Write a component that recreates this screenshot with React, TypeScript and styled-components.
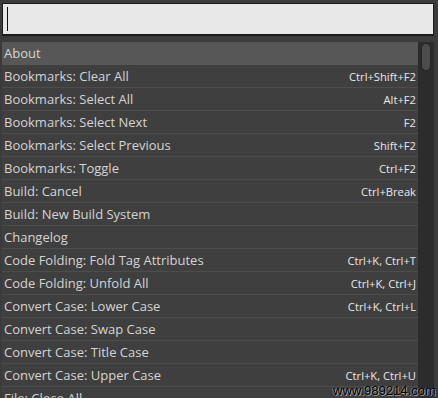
import React from "react";
import styled, { createGlobalStyle } from "styled-components";

const Global = createGlobalStyle`
  html, body { margin: 0; padding: 0; background: #3b3b3b; overflow: hidden; }
  body { width: 438px; height: 398px; }
`;

const Frame = styled.div`
  position: relative;
  width: 438px;
  height: 398px;
  box-sizing: border-box;
  padding: 3px 4px 0 2px;
  display: flex;
  flex-direction: column;
  gap: 6px;
  overflow: hidden;
  font-family: "Open Sans", "Noto Sans", sans-serif;
`;

const Search = styled.div`
  height: 33px;
  flex: 0 0 33px;
  box-sizing: border-box;
  background: #e8e8e8;
  border: 1px solid #1c1c1c;
  border-bottom-width: 2px;
  display: flex;
  align-items: center;
  padding-left: 4px;
`;

const Caret = styled.div`
  width: 1px;
  height: 24px;
  background: #111;
`;

const Body = styled.div`
  display: flex;
  flex: 1;
  min-height: 0;
`;

const List = styled.div`
  flex: 1;
  display: flex;
  flex-direction: column;
`;

const Row = styled.div<{ $active?: boolean }>`
  height: 23px;
  flex: 0 0 23px;
  box-sizing: border-box;
  display: flex;
  align-items: center;
  justify-content: space-between;
  padding: 0 2px;
  background: ${(p) => (p.$active ? "#575757" : "#3f3f3f")};
  border-bottom: 1px solid ${(p) => (p.$active ? "#575757" : "#4d4d4d")};
`;

const Label = styled.span`
  color: #d4d4d4;
  font-size: 13px;
  white-space: nowrap;
`;

const Keys = styled.span`
  color: #e8e8e8;
  font-size: 11.2px;
  white-space: nowrap;
`;

const Track = styled.div`
  width: 16px;
  flex: 0 0 16px;
  background: #2c2c2c;
  display: flex;
  justify-content: center;
  padding-top: 1px;
`;

const Thumb = styled.div`
  width: 10px;
  height: 28px;
  box-sizing: border-box;
  border-radius: 5px;
  background: #4c4c4c;
  border: 1px solid #242424;
`;

const Watermark = styled.div`
  position: absolute;
  left: 333px;
  bottom: 1px;
  font-family: "Liberation Sans", Arial, sans-serif;
  font-size: 13px;
  line-height: 13px;
  color: #000;
  text-shadow: 1px 1px 0 rgba(255, 255, 255, 0.45), -1px 0 0 rgba(255, 255, 255, 0.35);
`;

const items: [string, string][] = [
  ["About", ""],
  ["Bookmarks: Clear All", "Ctrl+Shift+F2"],
  ["Bookmarks: Select All", "Alt+F2"],
  ["Bookmarks: Select Next", "F2"],
  ["Bookmarks: Select Previous", "Shift+F2"],
  ["Bookmarks: Toggle", "Ctrl+F2"],
  ["Build: Cancel", "Ctrl+Break"],
  ["Build: New Build System", ""],
  ["Changelog", ""],
  ["Code Folding: Fold Tag Attributes", "Ctrl+K, Ctrl+T"],
  ["Code Folding: Unfold All", "Ctrl+K, Ctrl+J"],
  ["Convert Case: Lower Case", "Ctrl+K, Ctrl+L"],
  ["Convert Case: Swap Case", ""],
  ["Convert Case: Title Case", ""],
  ["Convert Case: Upper Case", "Ctrl+K, Ctrl+U"],
  ["File: Close All", ""],
];

export default function App() {
  return (
    <>
      <Global />
      <Frame>
        <Search>
          <Caret />
        </Search>
        <Body>
          <List>
            {items.map(([l, k], i) => (
              <Row key={l} $active={i === 0}>
                <Label>{l}</Label>
                {k && <Keys>{k}</Keys>}
              </Row>
            ))}
          </List>
          <Track>
            <Thumb />
          </Track>
        </Body>
        <Watermark>www.989214.com</Watermark>
      </Frame>
    </>
  );
}
